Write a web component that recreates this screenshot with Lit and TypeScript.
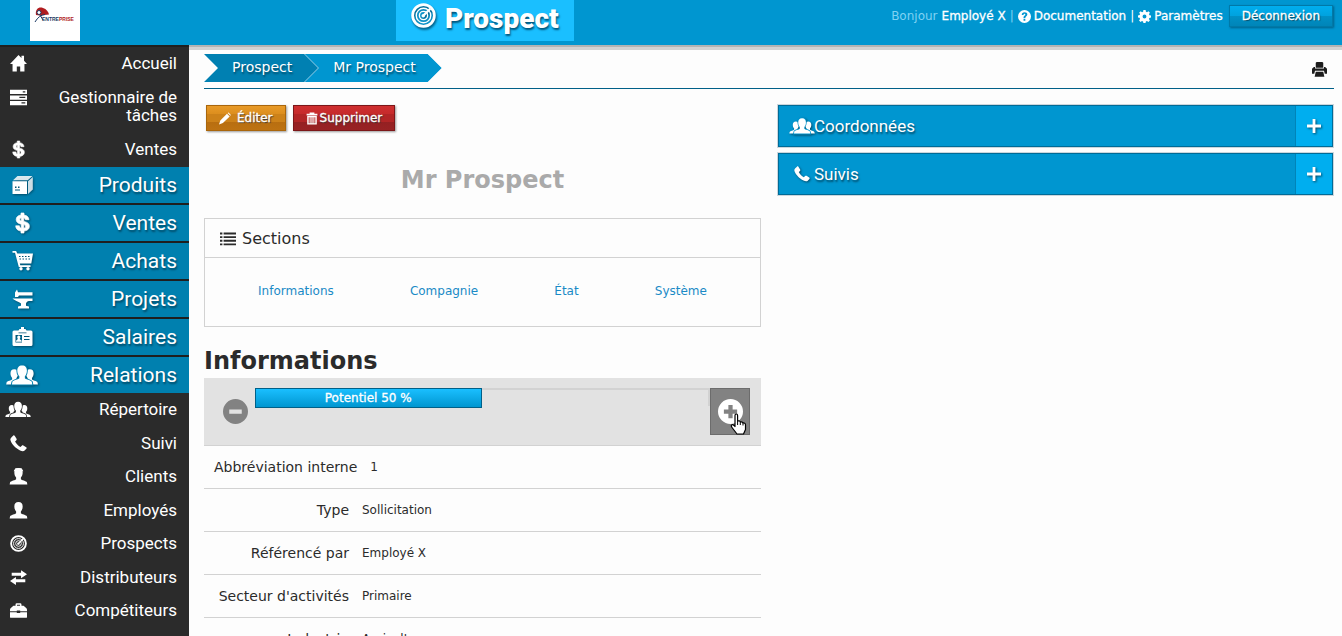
import { LitElement, html, svg, css, SVGTemplateResult } from "lit";
import { customElement, property, state } from "lit/decorators.js";

const personShape = (x: number, s: number) => svg`<g transform="translate(${x} ${(1 - s) * 19.500}) scale(${s})">
  <path d="M10 0c3.400 0 4.900 2.100 4.900 5.200 0 2.600-.9 4.600-2.100 5.900v2.100c.6 1.100 6.500 2 7.100 3.600l.5 2.700H-.4l.5-2.700C.7 15.200 6.600 14.300 7.200 13.200v-2.100C6 9.800 5.100 7.800 5.100 5.200 5.100 2.100 6.600 0 10 0z"/></g>`;

/* Every glyph shares the 20 x 20 box unless a wider one is listed in WIDE. */
const ICONS: Record<string, SVGTemplateResult> = {
  home: svg`<path d="M10 0 0 10.500h3V19.500h5v-6h4v6h5v-9h3l-3.500-3.800V1h-3v2.500z"/>`,
  tasks: svg`<path fill-rule="evenodd" d="M0 1h20v5H0zM0 7.500h20v5H0zM0 14h20v5H0zM15 2.500h3V4h-3zM11 9h7v1.500h-7zM13.500 15.500H18V17h-4.500z"/>`,
  dollar: svg`<path d="M8.500 0h3v2c3 .4 4.700 2 5 4.700h-3.600c-.2-1-.7-1.600-1.600-1.900v3.600c3.600.8 5.600 2 5.600 4.900 0 2.800-2.100 4.500-5.400 4.800V20h-3v-1.900c-3.400-.4-5.200-2.300-5.300-5.300h3.700c.1 1.300.7 2.100 1.800 2.400v-4C5.300 10.400 3.700 9.100 3.700 6.600c0-2.600 1.800-4.200 4.800-4.600zm.2 4.800c-.9.200-1.400.8-1.400 1.600s.4 1.200 1.400 1.600zm2.600 10.500c1.200-.3 1.700-.9 1.700-1.900 0-.9-.5-1.400-1.700-1.800z" stroke="currentColor" stroke-width=".7"/>`,
  box: svg`<path fill-rule="evenodd" d="M0 6.200h14.500V19H0zM2.500 11.500H4V13H2.500zm3 0H7V13H5.500zM2.500 14.500h5v1h-5z"/><path d="M.5 5.200 5 1h15l-4.800 4.200z" opacity=".85"/><path d="M15.500 6.200 20.300 2v12.500l-4.800 4.500z" opacity=".8"/>`,
  cart: svg`<path fill-rule="evenodd" d="M0 0h3.600l1.200 2.500H20.500l-1.700 10H7.300l.5 1.700h10.200v1.700H6.300L2.500 1.700H0zM6.500 5v1H8V5zm3 0v1H11V5zm3 0v1H14V5zm3 0v1H17V5zM7 7.500v1h1.500v-1zm3 0v1h1.500v-1zm3 0v1h1.500v-1zm3 0v1h1.500v-1z"/><circle cx="8.500" cy="17.800" r="1.700"/><circle cx="15.500" cy="17.800" r="1.700"/>`,
  anvil: svg`<path d="M2.500 3.500 4.500.5 5.500 3.200H20v3.300H6.500L5.500 8h-3zM0 9.500h20v2.600h-3.500c-1.500.2-2.500 1.200-3 2.400v2.300l3 .7V19.500h-11v-2l3-.7v-2.300C7 12.700 3.500 12.600 0 9.500z"/>`,
  badge: svg`<path fill-rule="evenodd" d="M1.500 3.500H6l1-1.500h1.500V0h3v2H13l1 1.500h4.500Q20 3.500 20 5v12.500q0 1.500-1.500 1.500h-17Q0 19 0 17.500V5q0-1.500 1.500-1.500zM6 5.500h8v.8H6zM3 8v7.500h6.500V8zm8.500 1v1H17V9zm0 3v1H17v-1z"/><path d="M6.300 8.600c1.300 0 1.700 1.100 1.500 2.200l-.6 1.200 2 1.800v1H3.500v-1l1.900-1.800-.6-1.200c-.2-1.100.2-2.200 1.500-2.200z"/>`,
  people: svg`${personShape(-0.500, 0.78)}${personShape(15, 0.78)}<g class="front">${personShape(5.300, 0.98)}</g>`,
  phone: svg`<path d="M3.700.8c.6-.6 1.300-.5 1.800.2l2.200 3.300c.4.700.3 1.300-.2 1.800L6 7.600c1.100 2.500 3.700 5.100 6.300 6.400l1.600-1.500c.5-.5 1.100-.6 1.800-.2l3.300 2.200c.7.500.8 1.200.2 1.800l-2 2c-1.500 1.500-5 .9-9.400-2.700S.3 7.300.4 4.900C.4 3.700 2.500 1.900 3.700.8z"/>`,
  client: svg`${personShape(0, 1)}<path d="M4.300 3.800 6.300.3h7.400l2 3.500z"/>`,
  person: personShape(0, 1),
  target: svg`<circle cx="10" cy="10" r="8.700" fill="none" stroke="currentColor" stroke-width="2.200"/><g fill="none" stroke="currentColor" stroke-width="1.100"><circle cx="10" cy="10" r="5.800"/><circle cx="10" cy="10" r="3.300"/><path stroke-width="1.700" d="m9.500 10.500 6-6"/></g><circle cx="9.800" cy="10.200" r="1.400"/>`,
  swap: svg`<path d="M2 4.500h11V1.500L20 6.200l-7 4.700v-3H2zM18 12.200H7V9.300L0 14l7 4.700v-3h11z"/>`,
  brief: svg`<path fill-rule="evenodd" d="M6.500 4.500V3Q6.500 1.500 8 1.500h4q1.500 0 1.500 1.500v1.500H16l3 2.500q1 .8 1 2V11h-8v-1H8v1H0V9q0-1.200 1-2l3-2.500zm1.700 0h3.600V3.200H8.200zM0 12h8v1h4v-1h8v5.500q0 1-1 1H1q-1 0-1-1z"/>`,
  book: svg`<path d="M3 1h5v18H3zM10 1h7v18h-7z"/>`,
  help: svg`<path fill-rule="evenodd" d="M10 0a10 10 0 1 1 0 20a10 10 0 0 1 0-20zM8.500 13.800v2.700h2.800v-2.700zM5.800 7.500h2.700c.1-1.200.6-1.700 1.500-1.700.8 0 1.300.4 1.300 1.100 0 1.500-2.800 1.900-2.800 4.700v1h2.700c0-2.400 3.200-2.700 3.200-5.900 0-2-1.700-3.300-4.300-3.300-2.700 0-4.300 1.500-4.300 4.100z"/>`,
  gear: svg`<path fill-rule="evenodd" d="M8.300 0h3.400l.5 2.600 1.700.7L16.100 1.800l2.300 2.300-1.500 2.200.7 1.700 2.400.4v3.300l-2.500.5-.7 1.700 1.500 2.200-2.300 2.300-2.200-1.500-1.700.7-.5 2.400H8.300l-.5-2.500-1.700-.7-2.200 1.500-2.300-2.300 1.500-2.200-.7-1.700L0 11.700V8.300l2.500-.5.700-1.700-1.500-2L4 1.800l2.200 1.500 1.700-.7zM10 7a3 3 0 1 0 0 6a3 3 0 0 0 0-6z"/>`,
  print: svg`<path d="M5 7.500V1L6.200 0h7.600L15 1v6.500zM2.500 6.500H4v2h12v-2h1.500L20 9v6.500h-3l-1-4H4l-1 4H0V9zM5 13h10l1.500 6.500h-13z"/>`,
  pencil: svg`<path d="m14.500 1 1.500-.8 3.800 3.800-1 1.500zM13.300 2.200l4.500 4.500L6.500 17.500 0 20l2.200-6.500z"/>`,
  trash: svg`<path fill-rule="evenodd" d="M6 2V0h8v2h5v3H1V2zM2 6h16v14H2zm2.500 2v10H6V8zm3.200 0v10h1.300V8zm3.300 0v10h1.300V8zm3 0v10h1.500V8z"/>`,
  list: svg`<path d="M0 2h3v2.300H0zm4.500 0H20v2.300H4.500zM0 6.500h3v2.300H0zm4.500 0H20v2.300H4.500zM0 11h3v2.300H0zm4.500 0H20v2.300H4.500zM0 15.500h3v2.300H0zm4.500 0H20v2.300H4.500z"/>`,
  minus: svg`<path fill-rule="evenodd" d="M10 0a10 10 0 1 1 0 20a10 10 0 0 1 0-20zM5 8.300v3.400h10V8.300z"/>`,
  plusCircle: svg`<path fill-rule="evenodd" d="M10 0a10 10 0 1 1 0 20a10 10 0 0 1 0-20zM8.300 4.700v3.600H4.700v3.400h3.600v3.600h3.400v-3.600h3.600V8.300h-3.600V4.700z"/>`,
  plus: svg`<path d="M8 0h4v8h8v4h-8v8H8v-8H0V8h8z"/>`,
};
const WIDE: Record<string, string> = { people: "0 0 30 20" };

@customElement("ui-icon")
class UiIcon extends LitElement {
  @property() name = "";
  static styles = css`
    :host { display: inline-block; flex: none; width: 16px; height: 16px; }
    svg { display: block; width: 100%; height: 100%; fill: currentColor; overflow: visible; }
    .front { stroke: var(--cut, transparent); stroke-width: 2px; paint-order: stroke; }
  `;
  render() {
    return html`<svg viewBox=${WIDE[this.name] ?? "0 0 20 20"} aria-hidden="true">${ICONS[this.name]}</svg>`;
  }
}

interface Entry { icon: string; label: string; }

const TOP: Entry[] = [
  { icon: "home", label: "Accueil" },
  { icon: "tasks", label: "Gestionnaire de tâches" },
  { icon: "dollar", label: "Ventes" },
];
const GROUPS: Entry[] = [
  { icon: "box", label: "Produits" },
  { icon: "dollar", label: "Ventes" },
  { icon: "cart", label: "Achats" },
  { icon: "anvil", label: "Projets" },
  { icon: "badge", label: "Salaires" },
  { icon: "people", label: "Relations" },
];
const RELATIONS: Entry[] = [
  { icon: "people", label: "Répertoire" },
  { icon: "phone", label: "Suivi" },
  { icon: "client", label: "Clients" },
  { icon: "person", label: "Employés" },
  { icon: "target", label: "Prospects" },
  { icon: "swap", label: "Distributeurs" },
  { icon: "brief", label: "Compétiteurs" },
  { icon: "book", label: "Contacts" },
];
const DETAILS = [
  ["Abbréviation interne", "1"],
  ["Type", "Sollicitation"],
  ["Référencé par", "Employé X"],
  ["Secteur d'activités", "Primaire"],
  ["Industrie", "Agriculture"],
];

@customElement("side-menu")
class SideMenu extends LitElement {
  static styles = css`
    :host { display: block; width: 189px; flex: none; background: #2b2b2b; border-top: 2px solid #1f1f1f; box-sizing: border-box; font-family: Roboto, sans-serif; color: #fff; }
    ul { list-style: none; margin: 0; padding: 0; }
    a { display: flex; justify-content: space-between; color: inherit; text-decoration: none; padding: 0 12px 0 8px; text-align: right; }
    .slot { display: flex; justify-content: center; flex: none; }
    .small a { font-size: 17px; line-height: 18px; padding-top: 7px; padding-bottom: 9px; }
    .small .slot { width: 20px; padding-top: 1px; }
    .small ui-icon { width: 17px; height: 17px; }
    .small .people { width: 24px; flex: none; margin: 0 -2px; }
    .sub { display: grid; grid-auto-rows: 34px 33px; --cut: #2b2b2b; }
    .groups { --cut: #0080af; }
    .groups a { font-size: 21px; line-height: 36px; background: #0080af; border-bottom: 2px solid #1f1f1f; text-shadow: 1px 2px 2px #004a68; align-items: center; }
    .groups li:last-child a { border-bottom: 0; }
    .groups .slot { width: 28px; }
    .groups ui-icon { width: 21px; height: 20px; filter: drop-shadow(1px 1px 1px #004a68); }
    .groups .people { width: 30px; }
  `;
  private items(list: Entry[]) {
    return list.map((e) => html`<li><a href="#"><span class="slot"><ui-icon class=${e.icon} name=${e.icon}></ui-icon></span><span>${e.label}</span></a></li>`);
  }
  render() {
    return html`<nav aria-label="Menu">
      <ul class="small">${this.items(TOP)}</ul>
      <ul class="groups">${this.items(GROUPS)}</ul>
      <ul class="small sub">${this.items(RELATIONS)}</ul>
    </nav>`;
  }
}

@customElement("app-header")
class AppHeader extends LitElement {
  static styles = css`
    :host { display: grid; grid-template-columns: 396px auto 1fr; align-items: start; height: 45px; background: #0096d0; color: #fff; position: relative; z-index: 1; }
    .logo { display: block; margin-left: 30px; width: 50px; height: 41px; background: #fff; }
    .title { display: flex; align-items: center; gap: 9px; box-sizing: border-box; height: 41px; margin: 0; padding: 0 15px 4px; background: #1abfff; font: 900 28px/36px Roboto, sans-serif; text-shadow: 1px 2px 2px #00567c; }
    .title ui-icon { width: 25px; height: 25px; margin-bottom: 6px; filter: drop-shadow(1px 2px 1px #00567c); }
    .user { display: flex; justify-content: flex-end; align-items: center; gap: 4px; padding: 5px 9px 0 0; font-size: 12px; line-height: 20px; white-space: nowrap; }
    .user a { display: flex; align-items: center; gap: 3px; color: #fff; text-decoration: none; -webkit-text-stroke: 0.3px #fff; }
    .user ui-icon { width: 13px; height: 13px; }
    .soft { color: #7fd2f3; }
    button { margin-left: 2px; font: inherit; color: #fff; height: 22px; padding: 0 12px; border: 1px solid #0079a8; border-radius: 0; line-height: 18px; background: linear-gradient(#00aeef, #00a2de 50%, #0090c6 50%, #0085b8); box-shadow: 1px 1px 2px #00618a; text-shadow: 1px 1px 1px #004a68; -webkit-text-stroke: 0.3px #fff; }
  `;
  render() {
    return html`
      <a class="logo" href="#" aria-label="Entreprise">
        <svg width="50" height="41" viewBox="0 0 50 41" aria-hidden="true">
          <path d="M6 15C5 9 9 6.500 13 8c3.500 1 5.500 4 6 6.500L10 15.500z" fill="#b01c1f"/>
          <circle cx="9" cy="12.500" r="2" fill="#fff" stroke="#1d3c66" stroke-width="1"/>
          <path d="M5 22q4-7 10-7.500M10 15l3 5" fill="none" stroke="#1d3c66" stroke-width="1"/>
          <text x="12" y="21" font-family="Liberation Sans, sans-serif" font-weight="700" font-size="5" fill="#1d3c66">ENTRE<tspan fill="#b01c1f">PRISE</tspan></text>
        </svg>
      </a>
      <h1 class="title"><ui-icon name="target"></ui-icon>Prospect</h1>
      <div class="user">
        <span class="soft">Bonjour</span><a href="#">Employé X</a><span class="soft">|</span>
        <a href="#"><ui-icon name="help"></ui-icon>Documentation</a><span>|</span>
        <a href="#"><ui-icon name="gear"></ui-icon>Paramètres</a>
        <button type="button">Déconnexion</button>
      </div>`;
  }
}

@customElement("app-root")
class AppRoot extends LitElement {
  @state() private potential = 50;

  static styles = css`
    :host { display: block; height: 100vh; overflow: hidden; background: #fdfdfd; color: #2b2b2b; font-family: Verdana, "DejaVu Sans", sans-serif; font-size: 12px; }
    .body { display: flex; align-items: stretch; min-height: calc(100vh - 45px); }
    main { flex: 1; min-width: 0; padding: 0 8px 0 15px; border-top: 2px solid #b3b3b3; box-shadow: inset 0 3px #d2d2d2; }
    .crumbs { display: flex; justify-content: space-between; align-items: flex-start; padding: 7px 0 6px; border-bottom: 1px solid #006088; }
    .crumbs ui-icon { width: 15px; height: 15px; color: #1c1c1c; margin: 8px 7px 0 0; }
    ol { display: flex; list-style: none; margin: 0; padding: 0; }
    .arrow { clip-path: polygon(0 0, calc(100% - 14px) 0, 100% 50%, calc(100% - 14px) 100%, 0 100%, 14px 50%); }
    .crumb { background: #0080b2; }
    .crumb + .crumb { margin-left: -14px; background: #5db9df; }
    .crumb a { display: block; padding: 0 26px 0 28px; font-size: 14px; line-height: 27px; height: 28px; color: #fff; text-decoration: none; text-shadow: 1px 2px 2px #004a68; }
    .crumb + .crumb a { background: #0096d0; margin-left: 1px; }
    .columns { display: grid; grid-template-columns: 1fr 1fr; gap: 16px; padding-top: 16px; align-items: start; }
    .actions { display: flex; gap: 7px; padding-left: 2px; }
    .action { display: flex; align-items: center; gap: 2px; height: 26px; padding: 0 12px; font: inherit; color: #fff; border: 1px solid; border-radius: 0; box-shadow: 1px 1px 2px #999; text-shadow: 1px 1px 1px #333; -webkit-text-stroke: 0.3px #fff; }
    .action ui-icon { width: 12px; height: 13px; }
    .edit { gap: 6px; border-color: #a9660c; background: linear-gradient(#e89a28, #dc8e1e 33%, #cd8219 33%, #cd8219 66%, #b86e10 66%, #bd7212); }
    .delete { border-color: #7c1719; background: linear-gradient(#cf2f30, #c62a2b 33%, #b22526 33%, #b22526 66%, #942022 66%, #982224); }
    .name { margin: 33px 0 22px; font-size: 24px; line-height: 32px; text-align: center; color: #aaa; }
    .sections { border: 1px solid #d2d2d2; }
    .sections h3 { display: flex; align-items: center; gap: 6px; margin: 0; padding: 2px 15px 0; font-size: 16px; font-weight: 400; line-height: 36px; border-bottom: 1px solid #d2d2d2; }
    .links { display: flex; justify-content: space-around; padding: 23px 15px 25px; line-height: 20px; }
    .links a { color: #1a8ac6; text-decoration: none; }
    h2 { margin: 18px 0 0; font-size: 24px; line-height: 33px; }
    .meter { display: flex; height: 47px; padding: 10px 11px; background: #e2e2e2; border-bottom: 1px solid #d2d2d2; }
    .step { position: relative; display: flex; justify-content: center; align-items: center; width: 40px; padding: 0; border: 0; background: none; color: #828282; }
    .step ui-icon { width: 25px; height: 25px; }
    .more { background: #828282; border: 1px solid #6c6c6c; color: #fff; }
    .track { flex: 1; box-sizing: border-box; height: 18px; border-top: 2px solid #d2d2d2; border-right: 2px solid #d2d2d2; }
    .bar { box-sizing: border-box; height: 20px; margin-top: -2px; border: 1px solid #006088; background: linear-gradient(#1abfff, #0096d0); color: #fff; text-align: center; line-height: 18px; -webkit-text-stroke: 0.3px #fff; }
    .pointer { position: absolute; left: 18px; top: 23px; width: 20px; height: 24px; }
    dl { margin: 0; }
    .row { display: flex; align-items: center; height: 42px; border-bottom: 1px solid #d2d2d2; }
    dt { box-sizing: border-box; min-width: 145px; padding-left: 10px; text-align: right; font-size: 14px; }
    dd { margin: 0 0 0 13px; }
    .panels { display: grid; gap: 6px; padding: 0 1px; }
    .panel { display: flex; align-items: stretch; width: 100%; height: 42px; padding: 0; border: 1px solid #006b97; outline: 1px solid #ccd6dc; background: #0096d0; color: #fff; font: 17px Roboto, sans-serif; text-align: left; text-shadow: 1px 2px 2px #004a68; --cut: #0096d0; }
    .caption { flex: 1; display: flex; align-items: center; padding-left: 10px; }
    .glyph { display: flex; justify-content: center; width: 25px; }
    .glyph ui-icon { filter: drop-shadow(1px 1px 1px #004a68); }
    .glyph .people { width: 24px; }
    .toggle { display: flex; align-items: center; justify-content: center; width: 36px; background: #00aeef; border-left: 1px solid #0084b8; }
    .toggle ui-icon { width: 14px; height: 14px; filter: drop-shadow(1px 1px 1px #004a68); }
  `;

  private step(delta: number) {
    this.potential = Math.max(0, Math.min(100, this.potential + delta));
  }

  private panel(icon: string, label: string) {
    return html`<button class="panel" type="button" aria-expanded="false">
      <span class="caption"><span class="glyph"><ui-icon class=${icon} name=${icon}></ui-icon></span>${label}</span>
      <span class="toggle"><ui-icon name="plus"></ui-icon></span>
    </button>`;
  }

  render() {
    return html`
      <app-header></app-header>
      <div class="body">
        <side-menu></side-menu>
        <main>
          <div class="crumbs">
            <ol>
              <li class="crumb arrow"><a href="#">Prospect</a></li>
              <li class="crumb arrow"><a class="arrow" href="#">Mr Prospect</a></li>
            </ol>
            <a href="#" aria-label="Imprimer"><ui-icon name="print"></ui-icon></a>
          </div>
          <div class="columns">
            <section>
              <div class="actions">
                <button class="action edit" type="button"><ui-icon name="pencil"></ui-icon>Éditer</button>
                <button class="action delete" type="button"><ui-icon name="trash"></ui-icon>Supprimer</button>
              </div>
              <h1 class="name">Mr Prospect</h1>
              <nav class="sections">
                <h3><ui-icon name="list"></ui-icon>Sections</h3>
                <div class="links">
                  ${["Informations", "Compagnie", "État", "Système"].map((t) => html`<a href="#">${t}</a>`)}
                </div>
              </nav>
              <h2>Informations</h2>
              <div class="meter">
                <button class="step" type="button" aria-label="Diminuer" @click=${() => this.step(-10)}><ui-icon name="minus"></ui-icon></button>
                <div class="track">
                  <div class="bar" style="width:${this.potential}%">Potentiel ${this.potential} %</div>
                </div>
                <button class="step more" type="button" aria-label="Augmenter" @click=${() => this.step(10)}>
                  <ui-icon name="plusCircle"></ui-icon>
                  <svg class="pointer" viewBox="0 0 20 24" aria-hidden="true">
                    <path d="M6 14V3.500Q6 2 7.300 2T8.600 3.500V9q2.400-.6 2.700 1 2.300-.5 2.700 1 2.500-.3 2.500 2v4.500L14.500 22H8L3 15.500Q1.500 13.500 3 12.700q1.300-.4 3 1.800z" fill="#fff" stroke="#000" stroke-width="1.200" stroke-linejoin="round"/>
                    <path d="M8.600 9v4M11.300 10v3M14 11v2.500" stroke="#000" stroke-width="1"/>
                  </svg>
                </button>
              </div>
              <dl>${DETAILS.map(([k, v]) => html`<div class="row"><dt>${k}</dt><dd>${v}</dd></div>`)}</dl>
            </section>
            <aside class="panels">
              ${this.panel("people", "Coordonnées")}
              ${this.panel("phone", "Suivis")}
            </aside>
          </div>
        </main>
      </div>`;
  }
}
